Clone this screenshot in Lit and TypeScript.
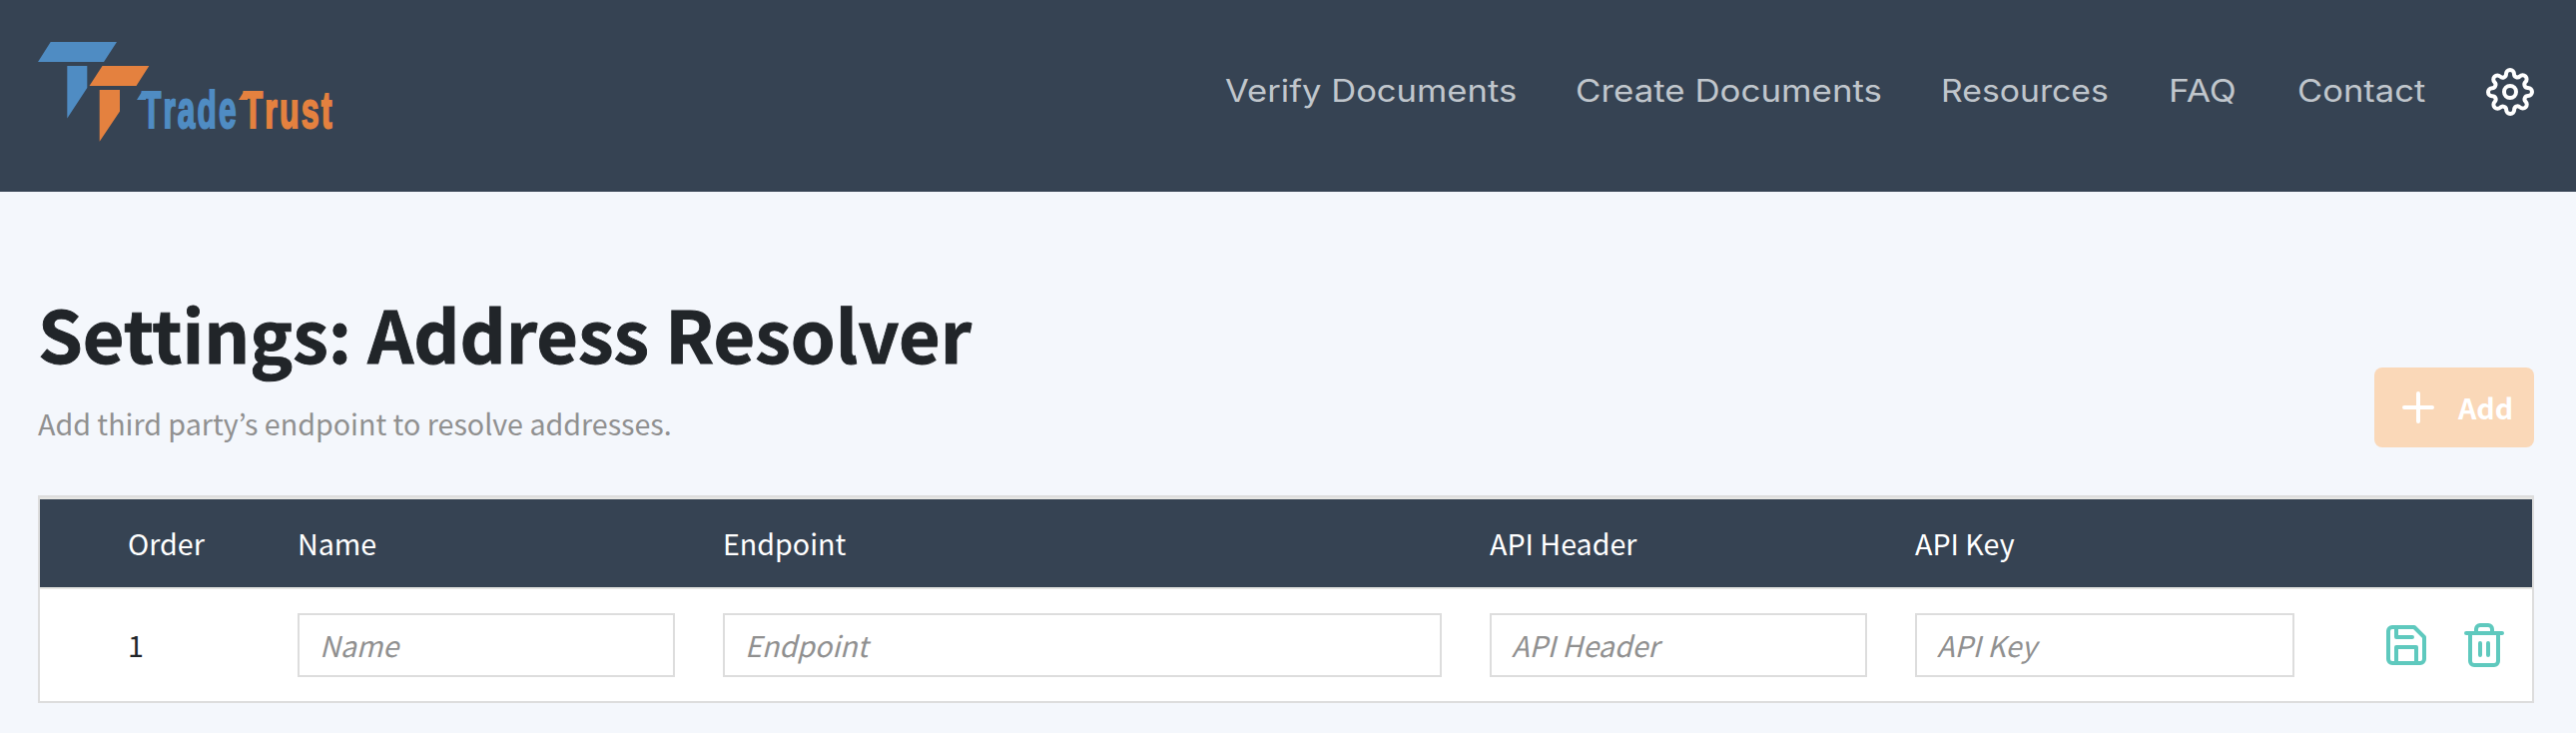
import { LitElement, html, svg, css } from "lit";
import { customElement, property } from "lit/decorators.js";

const ICONS: Record<string, unknown> = {
  settings: svg`<circle cx="12" cy="12" r="3"/><path d="M19.4 15a1.65 1.65 0 0 0 .33 1.82l.06.06a2 2 0 0 1 0 2.83 2 2 0 0 1-2.83 0l-.06-.06a1.65 1.65 0 0 0-1.82-.33 1.65 1.65 0 0 0-1 1.51V21a2 2 0 0 1-2 2 2 2 0 0 1-2-2v-.09A1.65 1.65 0 0 0 9 19.4a1.65 1.65 0 0 0-1.82.33l-.06.06a2 2 0 0 1-2.83 0 2 2 0 0 1 0-2.83l.06-.06a1.65 1.65 0 0 0 .33-1.82 1.65 1.65 0 0 0-1.51-1H3a2 2 0 0 1-2-2 2 2 0 0 1 2-2h.09A1.65 1.65 0 0 0 4.6 9a1.65 1.65 0 0 0-.33-1.82l-.06-.06a2 2 0 0 1 0-2.83 2 2 0 0 1 2.83 0l.06.06a1.65 1.65 0 0 0 1.82.33H9a1.65 1.65 0 0 0 1-1.51V3a2 2 0 0 1 2-2 2 2 0 0 1 2 2v.09a1.65 1.65 0 0 0 1 1.51 1.65 1.65 0 0 0 1.82-.33l.06-.06a2 2 0 0 1 2.83 0 2 2 0 0 1 0 2.83l-.06.06a1.65 1.65 0 0 0-.33 1.82V9a1.65 1.65 0 0 0 1.51 1H21a2 2 0 0 1 2 2 2 2 0 0 1-2 2h-.09a1.65 1.65 0 0 0-1.51 1z"/>`,
  plus: svg`<path d="M12 5v14M5 12h14"/>`,
  save: svg`<path d="M19 21H5a2 2 0 0 1-2-2V5a2 2 0 0 1 2-2h11l5 5v11a2 2 0 0 1-2 2z"/><path d="M17 21v-8H7v8M7 3v5h8"/>`,
  trash: svg`<path d="M3 6h18M19 6v14a2 2 0 0 1-2 2H7a2 2 0 0 1-2-2V6m3 0V4a2 2 0 0 1 2-2h4a2 2 0 0 1 2 2v2M10 11v6M14 11v6"/>`,
};

@customElement("line-icon")
export class LineIcon extends LitElement {
  @property() name = "";
  static styles = css`
    :host { display: block; width: 48px; height: 48px; flex: none; }
    svg { display: block; width: 48px; height: 48px; fill: none; stroke: currentColor;
      stroke-width: 2; stroke-linecap: round; stroke-linejoin: round; }
  `;
  render() {
    return html`<svg viewBox="0 0 24 24">${ICONS[this.name]}</svg>`;
  }
}

@customElement("brand-logo")
export class BrandLogo extends LitElement {
  static styles = css`
    :host { display: block; }
    svg { display: block; width: 310px; height: 110px; overflow: visible; }
    .blue { fill: #4f8cc3; }
    .orange { fill: #e4813f; }
    .word { font: 700 51px "Liberation Sans", sans-serif; letter-spacing: 3.4px; font-kerning: none;
      stroke-width: 2px; }
    .word.blue { stroke: #4f8cc3; }
    .word.orange { stroke: #e4813f; }
  `;
  render() {
    return html`<svg viewBox="38 41 310 110">
      <path class="blue" d="M50.7 42H117L104 62H38zM67.3 66H87.3V88L67.3 118.5z"/>
      <path class="orange" d="M102.5 66H149.3L136.5 86H89.5zM99.7 90H120V111.5L99.7 141.8z"/>
      <path class="blue" d="M142 92H146V100H137z"/>
      <path class="orange" d="M244 92H248V100H239z"/>
      <text class="word blue" transform="translate(142 128) scale(.62 1)">Trade</text>
      <text class="word orange" transform="translate(243.600 128) scale(.63 1)">Trust</text>
    </svg>`;
  }
}

const NAV = [
  { label: "Verify Documents", cls: "verify" },
  { label: "Create Documents", cls: "create" },
  { label: "Resources", cls: "resources" },
  { label: "FAQ", cls: "faq" },
  { label: "Contact", cls: "contact" },
];
const FIELDS = ["Name", "Endpoint", "API Header", "API Key"];

@customElement("app-root")
export class AppRoot extends LitElement {
  static styles = css`
    * { box-sizing: border-box; }
    :host { display: block; height: 734px; overflow: hidden; background: #f4f7fc; color: #212529;
      font: 400 28.65px/48px "Noto Sans CJK KR", sans-serif; }
    .topbar { height: 192px; padding: 41px 42px 0 38px; display: flex; justify-content: space-between; background: #364353; }
    nav { display: flex; align-items: center; height: 48px; margin-top: 27px; color: #c0c6cc; }
    .link { font: 400 30.7px/46px Inter, sans-serif; white-space: nowrap; height: 48px; margin-right: 60px; }
    .link span { display: inline-block; transform-origin: 0 50%; }
    .verify { width: 291px; }
    .verify span { transform: scaleX(1.127); }
    .create { width: 306.5px; }
    .create span { transform: scaleX(1.136); }
    .resources { width: 168px; }
    .resources span { transform: scaleX(1.1); }
    .faq { width: 69px; }
    .faq span { transform: scaleX(1.15); }
    .contact { width: 129px; }
    .contact span { transform: scaleX(1.125); }
    nav line-icon { color: #fff; }
    main { padding: 0 42px 0 38px; }
    .intro { height: 304px; display: flex; justify-content: space-between; align-items: flex-end; padding-bottom: 48px; }
    h1 { margin: 0 0 19px; font-size: 71.8px; line-height: 96px; font-weight: 700; white-space: nowrap;
      -webkit-text-stroke: 0.9px #212529; }
    p { margin: 0; color: #909090; }
    .add { width: 160px; height: 80px; border: 0; border-radius: 8px; background: #fad8b8; color: #fff;
      display: flex; align-items: center; gap: 16px; padding: 0 0 0 20px; font: 700 28.6px/48px "Noto Sans CJK KR", sans-serif; }
    .table { border: 2px solid #ddd; background: #fff; }
    .row { display: grid; grid-template-columns: 258px 426px 768px 426px 468px 78px 48px; align-items: center; height: 112px; }
    .head { height: 92px; background: #364353; color: #fff; border-top: 2px solid #e6e6e3; border-bottom: 2px solid #e6e6e3; }
    .order { padding-left: 88px; }
    input { height: 64px; width: calc(100% - 48px); border: 2px solid #ddd; background: #fff; padding: 0 20px 2px; font: inherit; border-radius: 0; }
    input.last { width: 380px; }
    input::placeholder { color: #909090; font-style: italic; opacity: 1; }
    .row line-icon { color: #5fc9be; }
  `;
  render() {
    return html`
      <header class="topbar">
        <brand-logo></brand-logo>
        <nav>
          ${NAV.map((n) => html`<a class="link ${n.cls}"><span>${n.label}</span></a>`)}
          <line-icon name="settings"></line-icon>
        </nav>
      </header>
      <main>
        <section class="intro">
          <div>
            <h1>Settings: Address Resolver</h1>
            <p>Add third party’s endpoint to resolve addresses.</p>
          </div>
          <button class="add"><line-icon name="plus"></line-icon>Add</button>
        </section>
        <section class="table">
          <div class="row head">
            <span class="order">Order</span>
            ${FIELDS.map((f) => html`<span>${f}</span>`)}
          </div>
          <div class="row">
            <span class="order">1</span>
            ${FIELDS.map((f) => html`<input class=${f === "API Key" ? "last" : ""} placeholder=${f} />`)}
            <line-icon name="save"></line-icon>
            <line-icon name="trash"></line-icon>
          </div>
        </section>
      </main>
    `;
  }
}
